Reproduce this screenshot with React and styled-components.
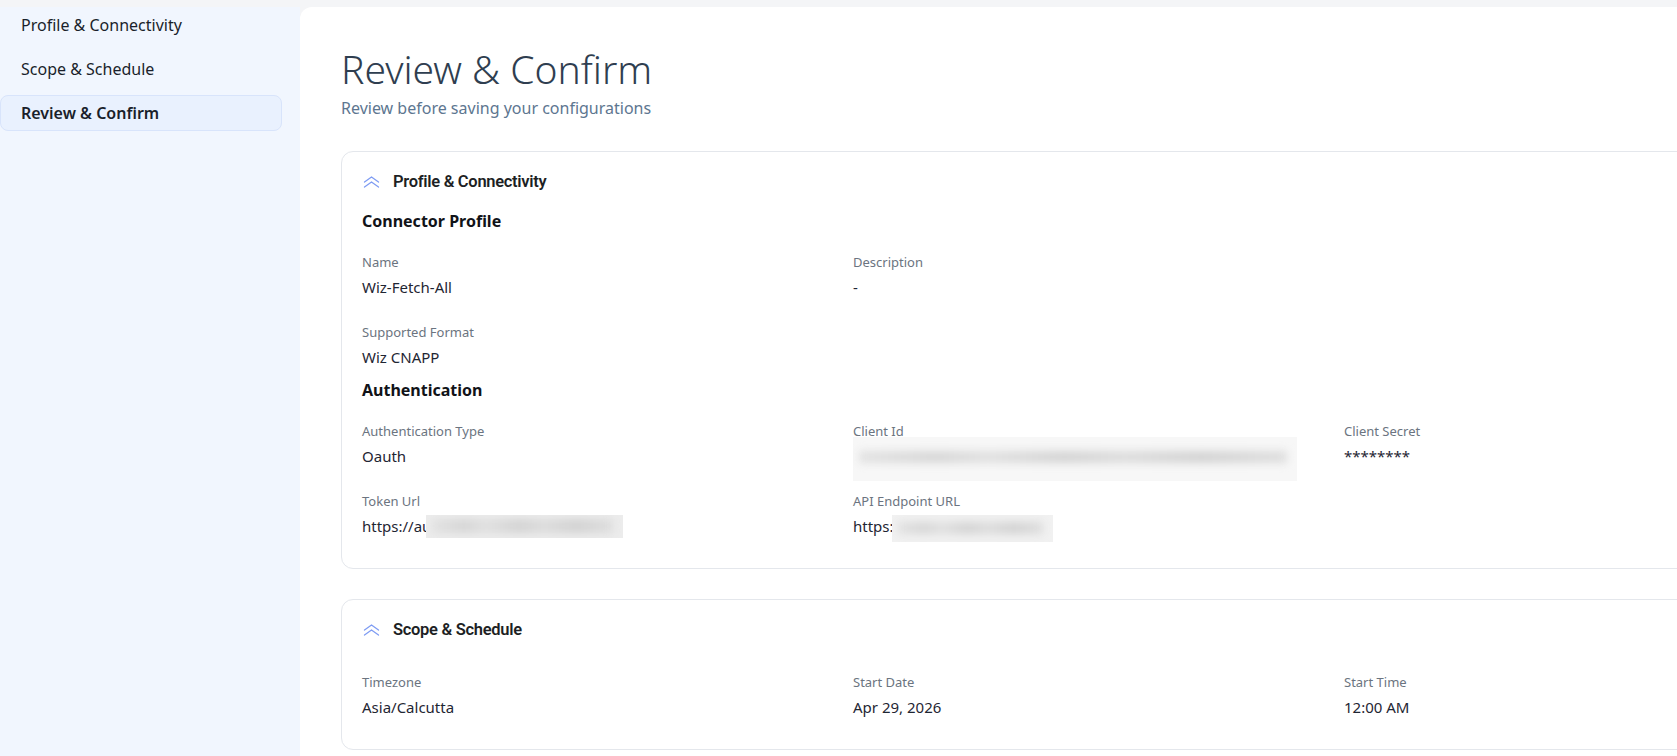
import React from "react";
import styled, { createGlobalStyle } from "styled-components";

const GlobalStyle = createGlobalStyle`
  html, body {
    margin: 0;
    padding: 0;
    height: 100%;
    overflow: hidden;
  }
  body {
    font-family: "Noto Sans", "Open Sans", "DejaVu Sans", sans-serif;
    color: #1f2937;
    background: #f4f5f7;
  }
  * { box-sizing: border-box; }
`;

const Shell = styled.div`
  display: flex;
  height: 100vh;
  padding-top: 7px;
  background: #f4f5f7;
  overflow: hidden;
`;

const Sidebar = styled.nav`
  width: 300px;
  flex-shrink: 0;
  background: #f1f6fe;
  display: flex;
  flex-direction: column;
  gap: 8px;
  padding-right: 18px;
`;

const NavItem = styled.div`
  height: 36px;
  display: flex;
  align-items: center;
  padding-left: 20px;
  font-size: 16px;
  color: #1a1f2b;
  font-weight: ${(p) => (p.$active ? 600 : 400)};
  background: ${(p) => (p.$active ? "#e9f1fe" : "transparent")};
  border: 1px solid ${(p) => (p.$active ? "#d8e4fb" : "transparent")};
  border-radius: 8px;
`;

const Main = styled.main`
  flex: 1;
  min-width: 0;
  background: #ffffff;
  border-top-left-radius: 12px;
  padding: 38px 0 0 41px;
`;

const Title = styled.h1`
  margin: 0;
  font-size: 39px;
  line-height: 48px;
  font-weight: 300;
  color: #2f3e50;
`;

const Subtitle = styled.p`
  margin: 3px 0 0;
  font-size: 16px;
  line-height: 24px;
  color: #5d7690;
`;

const CardStack = styled.div`
  display: flex;
  flex-direction: column;
  align-items: flex-start;
  gap: 30px;
  margin-top: 31px;
`;

const Card = styled.section`
  width: max-content;
  border: 1px solid #e4e7ec;
  border-radius: 12px;
  padding: 18px 20px 31px;
  background: #ffffff;
`;

const CardHeader = styled.div`
  display: flex;
  align-items: center;
  gap: 13px;
  height: 24px;
`;

const CollapseIcon = styled.svg`
  width: 17px;
  height: 12px;
  margin-left: 1px;
  flex-shrink: 0;
  stroke: #7f9cf3;
  stroke-width: 1.3;
  fill: none;
  stroke-linecap: round;
  stroke-linejoin: round;
`;

const CardTitle = styled.h2`
  margin: 0;
  font-family: Roboto, "Liberation Sans", sans-serif;
  font-size: 16.5px;
  line-height: 24px;
  font-weight: 600;
  letter-spacing: -0.3px;
  color: #1d1f24;
`;

const CardBody = styled.div`
  display: flex;
  flex-direction: column;
  gap: 10px;
  margin-top: ${(p) => p.$offset}px;
`;

const SectionTitle = styled.h3`
  margin: 0 0 20px;
  font-size: 16px;
  line-height: 24px;
  font-weight: 700;
  color: #111318;
`;

const FieldGrid = styled.div`
  display: grid;
  grid-template-columns: repeat(3, 467px);
  column-gap: 24px;
  row-gap: 25px;
`;

const Field = styled.div`
  display: flex;
  flex-direction: column;
  gap: 5px;
`;

const Label = styled.span`
  font-size: 13px;
  line-height: 18px;
  color: #6b7480;
`;

const Value = styled.span`
  font-size: 15px;
  line-height: 22px;
  height: 22px;
  color: #1f2633;
  white-space: nowrap;
  display: flex;
  align-items: center;
`;

/* masked secret values: a soft smear over the hidden characters */
const Redacted = styled.span`
  display: inline-block;
  position: relative;
  flex-shrink: 0;
  width: ${(p) => p.$w}px;
  height: ${(p) => p.$h}px;
  margin-left: ${(p) => p.$shift || 0}px;
  margin-top: ${(p) => p.$lift || 0}px;
  background: ${(p) => p.$tone || "#efefef"};
  overflow: hidden;

  &::after {
    content: "";
    position: absolute;
    left: 6px;
    right: 10px;
    top: ${(p) => p.$barTop || 50}%;
    height: ${(p) => p.$bar || 10}px;
    transform: translateY(-50%);
    background: linear-gradient(
      90deg,
      #e2e2e2 0%,
      #d6d6d6 18%,
      #e0e0e0 30%,
      #d3d3d3 48%,
      #dcdcdc 62%,
      #d2d2d2 80%,
      #dedede 100%
    );
    filter: blur(4px);
  }
`;

const ClientIdMask = styled(Redacted)`
  align-self: flex-start;
  margin-top: -8px;
  margin-bottom: -14px;
`;

function Collapse() {
  return (
    <CollapseIcon viewBox="0 0 17 12" aria-hidden="true">
      <path d="M1.5 6 L8.5 1 L15.5 6" />
      <path d="M1.5 11 L8.5 6 L15.5 11" />
    </CollapseIcon>
  );
}

export default function App() {
  return (
    <>
      <GlobalStyle />
      <Shell>
        <Sidebar>
          <NavItem>Profile &amp; Connectivity</NavItem>
          <NavItem>Scope &amp; Schedule</NavItem>
          <NavItem $active>Review &amp; Confirm</NavItem>
        </Sidebar>

        <Main>
          <Title>Review &amp; Confirm</Title>
          <Subtitle>Review before saving your configurations</Subtitle>

          <CardStack>
            <Card>
              <CardHeader>
                <Collapse />
                <CardTitle>Profile &amp; Connectivity</CardTitle>
              </CardHeader>
              <CardBody $offset={15}>
                <div>
                  <SectionTitle>Connector Profile</SectionTitle>
                  <FieldGrid>
                    <Field>
                      <Label>Name</Label>
                      <Value>Wiz-Fetch-All</Value>
                    </Field>
                    <Field>
                      <Label>Description</Label>
                      <Value>-</Value>
                    </Field>
                    <div />
                    <Field>
                      <Label>Supported Format</Label>
                      <Value>Wiz CNAPP</Value>
                    </Field>
                  </FieldGrid>
                </div>
                <div>
                  <SectionTitle>Authentication</SectionTitle>
                  <FieldGrid>
                    <Field>
                      <Label>Authentication Type</Label>
                      <Value>Oauth</Value>
                    </Field>
                    <Field>
                      <Label>Client Id</Label>
                      <Value>
                        <ClientIdMask $w={444} $h={44} $bar={12} $barTop={45} $tone="#f7f7f7" />
                      </Value>
                    </Field>
                    <Field>
                      <Label>Client Secret</Label>
                      <Value>********</Value>
                    </Field>
                    <Field>
                      <Label>Token Url</Label>
                      <Value>
                        https://au
                        <Redacted $w={197} $h={23} $shift={-5} $tone="#ececec" $bar={14} />
                      </Value>
                    </Field>
                    <Field>
                      <Label>API Endpoint URL</Label>
                      <Value>
                        https:
                        <Redacted $w={161} $h={27} $shift={-2} $lift={4} $tone="#f1f1f1" $bar={12} />
                      </Value>
                    </Field>
                  </FieldGrid>
                </div>
              </CardBody>
            </Card>

            <Card>
              <CardHeader>
                <Collapse />
                <CardTitle>Scope &amp; Schedule</CardTitle>
              </CardHeader>
              <CardBody $offset={31}>
                <FieldGrid>
                  <Field>
                    <Label>Timezone</Label>
                    <Value>Asia/Calcutta</Value>
                  </Field>
                  <Field>
                    <Label>Start Date</Label>
                    <Value>Apr 29, 2026</Value>
                  </Field>
                  <Field>
                    <Label>Start Time</Label>
                    <Value>12:00 AM</Value>
                  </Field>
                </FieldGrid>
              </CardBody>
            </Card>
          </CardStack>
        </Main>
      </Shell>
    </>
  );
}
